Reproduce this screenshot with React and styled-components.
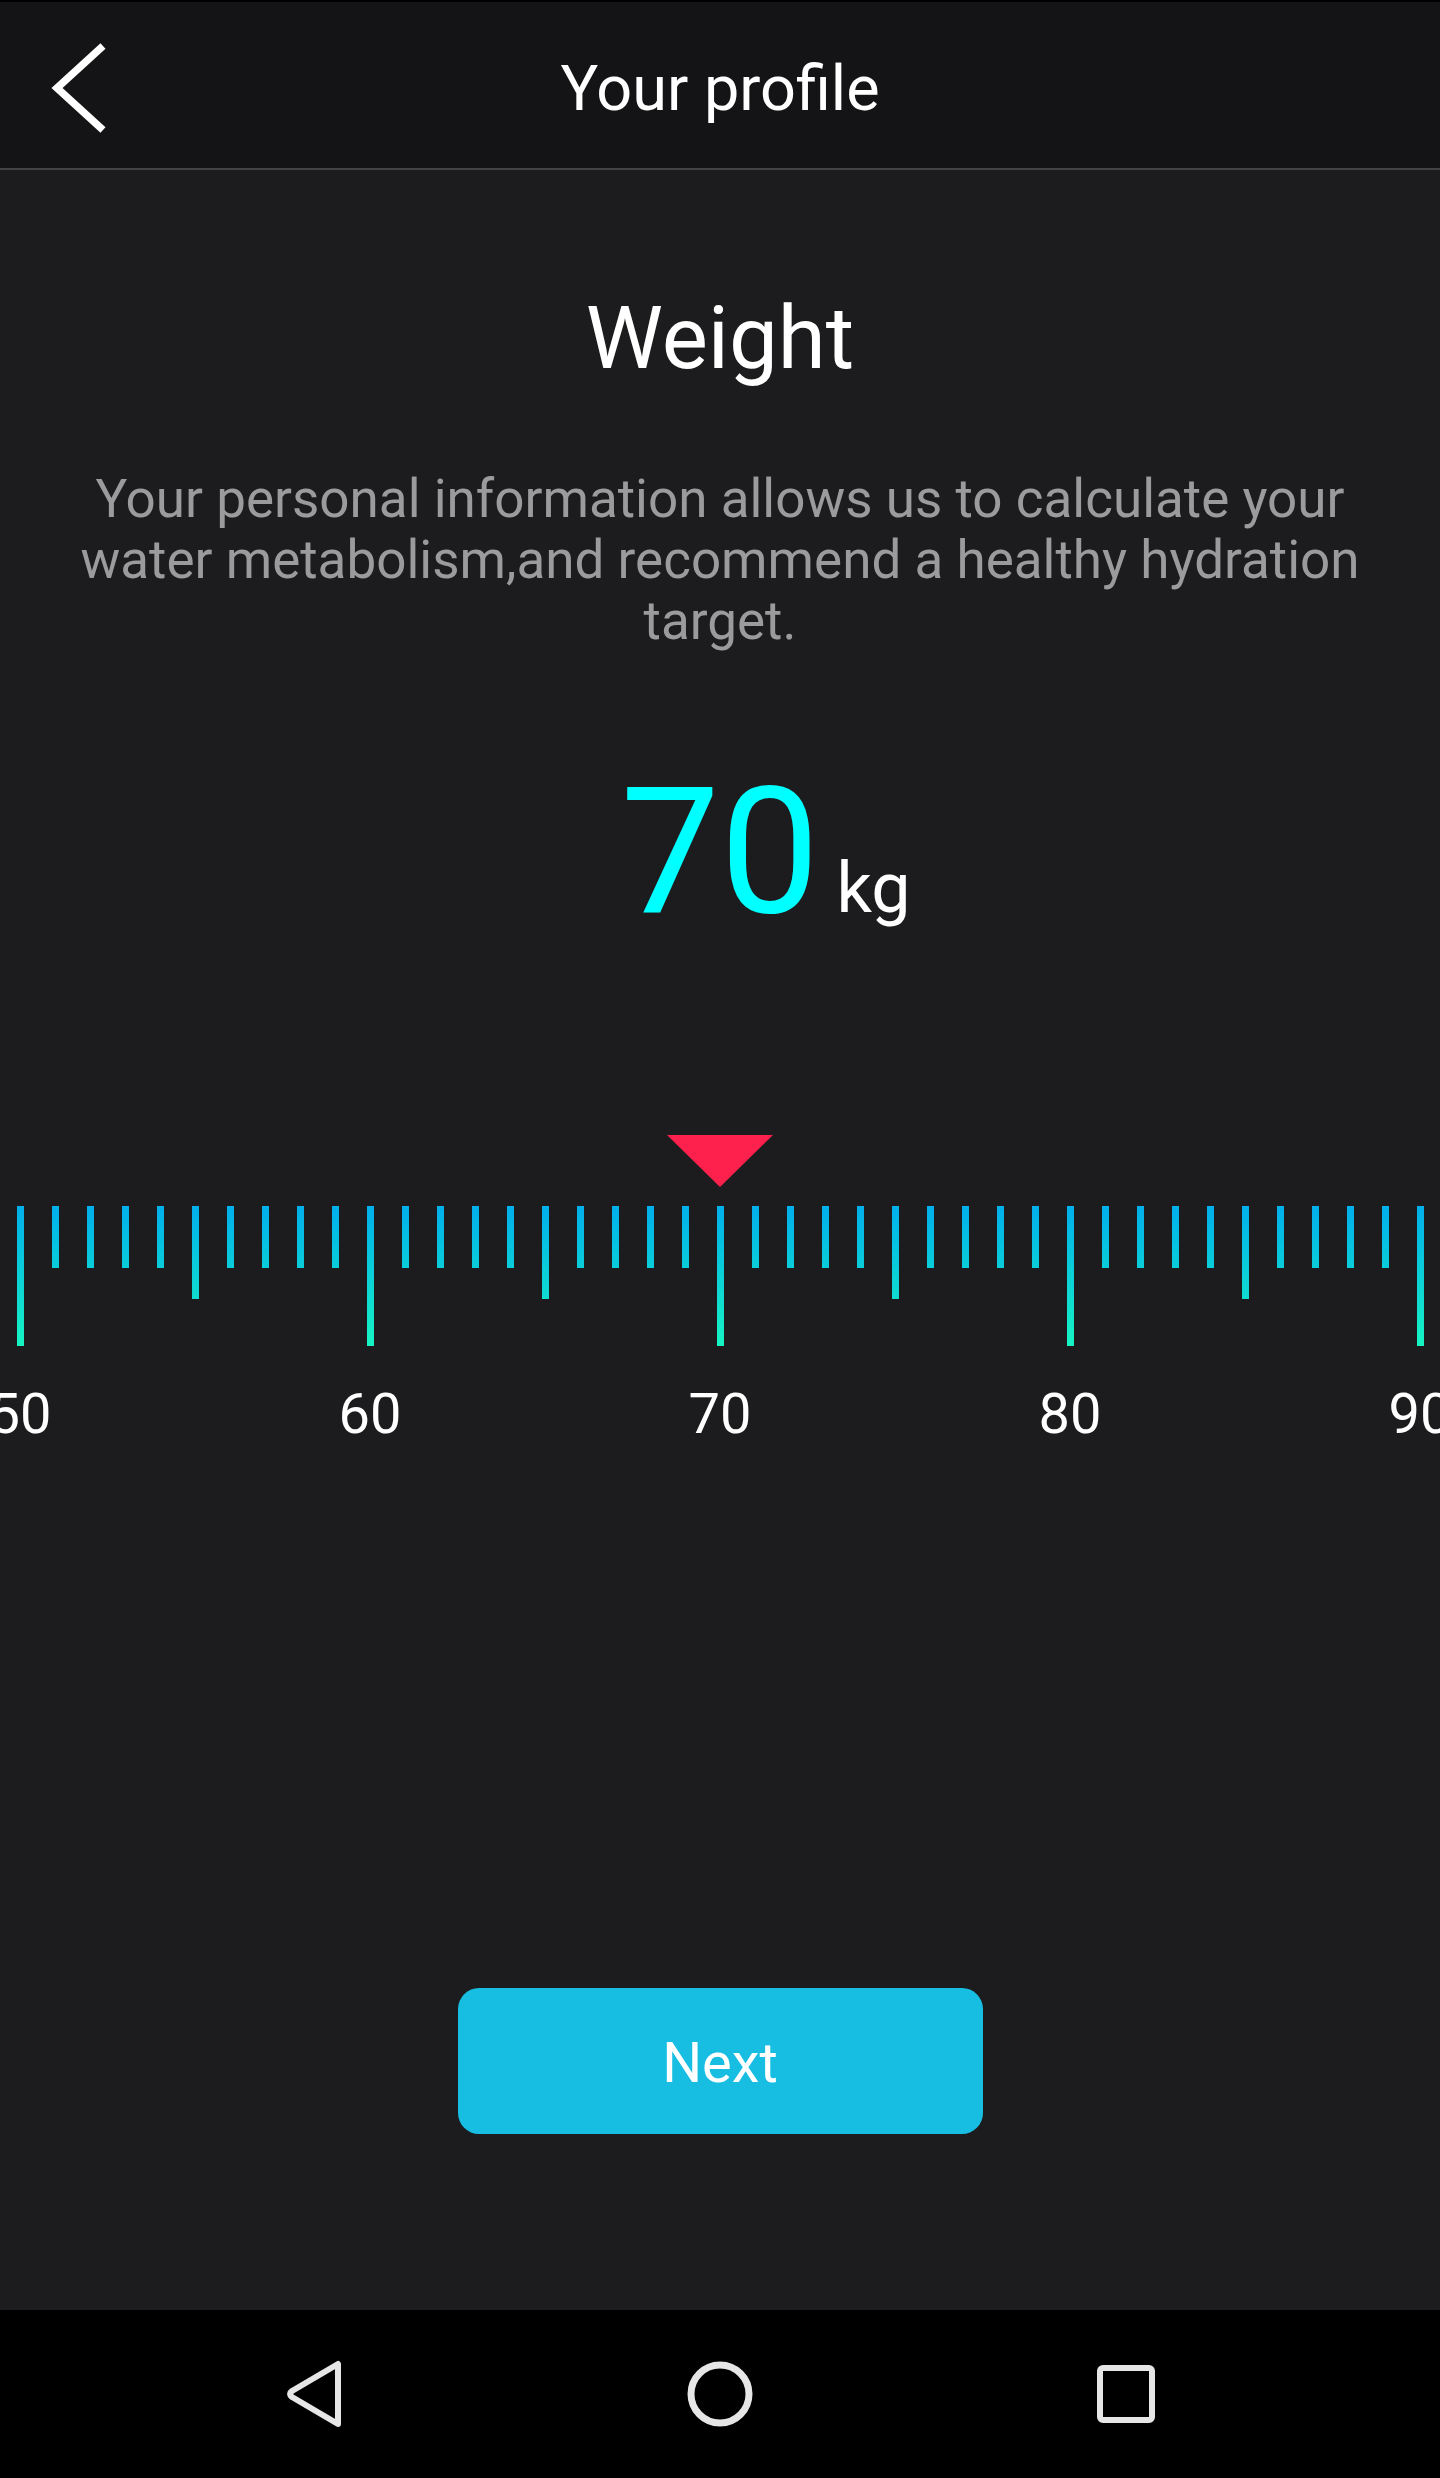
import styled, { createGlobalStyle } from "styled-components";

const GlobalStyle = createGlobalStyle`
  html, body {
    margin: 0;
    padding: 0;
    background: #000;
  }
  body {
    font-family: Roboto, "Liberation Sans", sans-serif;
  }
`;

const Screen = styled.div`
  width: 1440px;
  height: 2478px;
  display: flex;
  flex-direction: column;
  background-color: #1c1c1e;
  border-top: 2px solid #000;
  box-sizing: border-box;
  overflow: hidden;
`;

const Header = styled.div`
  height: 166px;
  flex-shrink: 0;
  display: flex;
  align-items: center;
  justify-content: center;
  position: relative;
  background-color: #141416;
  border-bottom: 2px solid #434345;
`;

const BackButton = styled.button`
  position: absolute;
  left: 48px;
  top: 38px;
  width: 64px;
  height: 94px;
  padding: 0;
  border: none;
  background: none;
  cursor: pointer;
`;

const HeaderTitle = styled.h1`
  margin: 0;
  padding-top: 6px;
  font-size: 63px;
  font-weight: 400;
  color: #fff;
`;

const Body = styled.div`
  flex: 1;
  display: flex;
  flex-direction: column;
  align-items: center;
  padding-bottom: 176px;
`;

const Title = styled.h2`
  margin: 118px 0 0;
  font-size: 87px;
  line-height: 100px;
  font-weight: 400;
  color: #fff;
`;

const Description = styled.p`
  margin: 81px 0 0;
  padding: 0 70px;
  font-size: 53px;
  line-height: 61px;
  color: #9b9b9d;
  text-align: center;
`;

const ValueRow = styled.div`
  width: 100%;
  margin-top: 111px;
  display: grid;
  grid-template-columns: 1fr auto 1fr;
  align-items: baseline;
`;

const Value = styled.span`
  grid-column: 2;
  font-size: 177px;
  line-height: 177px;
  color: #00ffff;
`;

const Unit = styled.span`
  grid-column: 3;
  margin-left: 17px;
  font-size: 70px;
  color: #fff;
`;

const Pointer = styled.div`
  margin-top: 195px;
  width: 0;
  height: 0;
  border-left: 53px solid transparent;
  border-right: 53px solid transparent;
  border-top: 52px solid #ff214d;
`;

const Ruler = styled.div`
  width: 100%;
  margin-top: 19px;
  display: flex;
  justify-content: center;
  overflow: hidden;
`;

const Slot = styled.div`
  width: 35px;
  flex-shrink: 0;
  display: flex;
  flex-direction: column;
  align-items: center;
`;

const TickWell = styled.div`
  height: 140px;
  display: flex;
  align-items: flex-start;
`;

const Tick = styled.div`
  width: 7px;
  height: ${({ $size }) => ($size === "major" ? 140 : $size === "mid" ? 93 : 62)}px;
  background: linear-gradient(to bottom, #00afec, #16f4c3) no-repeat;
  background-size: 100% 140px;
`;

const TickLabel = styled.span`
  margin-top: 40px;
  font-size: 56px;
  line-height: 56px;
  color: #fff;
  white-space: nowrap;
`;

const NextButton = styled.button`
  margin-top: auto;
  width: 525px;
  height: 146px;
  padding-top: 4px;
  border: none;
  border-radius: 21px;
  background-color: #17bee2;
  color: #fff;
  font-family: Roboto, "Liberation Sans", sans-serif;
  font-size: 56px;
  cursor: pointer;
`;

const NavBar = styled.div`
  height: 168px;
  flex-shrink: 0;
  display: flex;
  justify-content: center;
  align-items: center;
  background-color: #000;
`;

const NavSlot = styled.div`
  width: 406px;
  display: flex;
  justify-content: center;
  align-items: center;
`;

// 45..95 keeps 70 in the middle of the ruler
const values = Array.from({ length: 51 }, (_, i) => 45 + i);

const tickSize = (v) => (v % 10 === 0 ? "major" : v % 5 === 0 ? "mid" : "minor");

export default function App() {
  return (
    <>
      <GlobalStyle />
      <Screen>
        <Header>
          <BackButton aria-label="Back">
            <svg width="64" height="94" viewBox="0 0 64 94">
              <polyline
                points="55,6 9,48 55,90"
                fill="none"
                stroke="#fff"
                strokeWidth="7.5"
                strokeLinecap="butt"
                strokeLinejoin="miter"
              />
            </svg>
          </BackButton>
          <HeaderTitle>Your profile</HeaderTitle>
        </Header>

        <Body>
          <Title>Weight</Title>
          <Description>
            Your personal information allows us to calculate your water
            metabolism,and recommend a healthy hydration target.
          </Description>

          <ValueRow>
            <Value>70</Value>
            <Unit>kg</Unit>
          </ValueRow>

          <Pointer />

          <Ruler>
            {values.map((v) => (
              <Slot key={v}>
                <TickWell>
                  <Tick $size={tickSize(v)} />
                </TickWell>
                {v % 10 === 0 && <TickLabel>{v}</TickLabel>}
              </Slot>
            ))}
          </Ruler>

          <NextButton>Next</NextButton>
        </Body>

        <NavBar>
          <NavSlot>
            <svg width="60" height="70" viewBox="0 0 60 70">
              <path
                d="M54 5 L54 65 L8 38 Q4 35 8 32 Z"
                fill="none"
                stroke="#e6e6e6"
                strokeWidth="6"
                strokeLinejoin="round"
              />
            </svg>
          </NavSlot>
          <NavSlot>
            <svg width="68" height="68" viewBox="0 0 68 68">
              <circle cx="34" cy="34" r="29" fill="none" stroke="#e6e6e6" strokeWidth="7" />
            </svg>
          </NavSlot>
          <NavSlot>
            <svg width="60" height="60" viewBox="0 0 60 60">
              <rect x="4" y="4" width="52" height="52" rx="3" fill="none" stroke="#e6e6e6" strokeWidth="6" />
            </svg>
          </NavSlot>
        </NavBar>
      </Screen>
    </>
  );
}
